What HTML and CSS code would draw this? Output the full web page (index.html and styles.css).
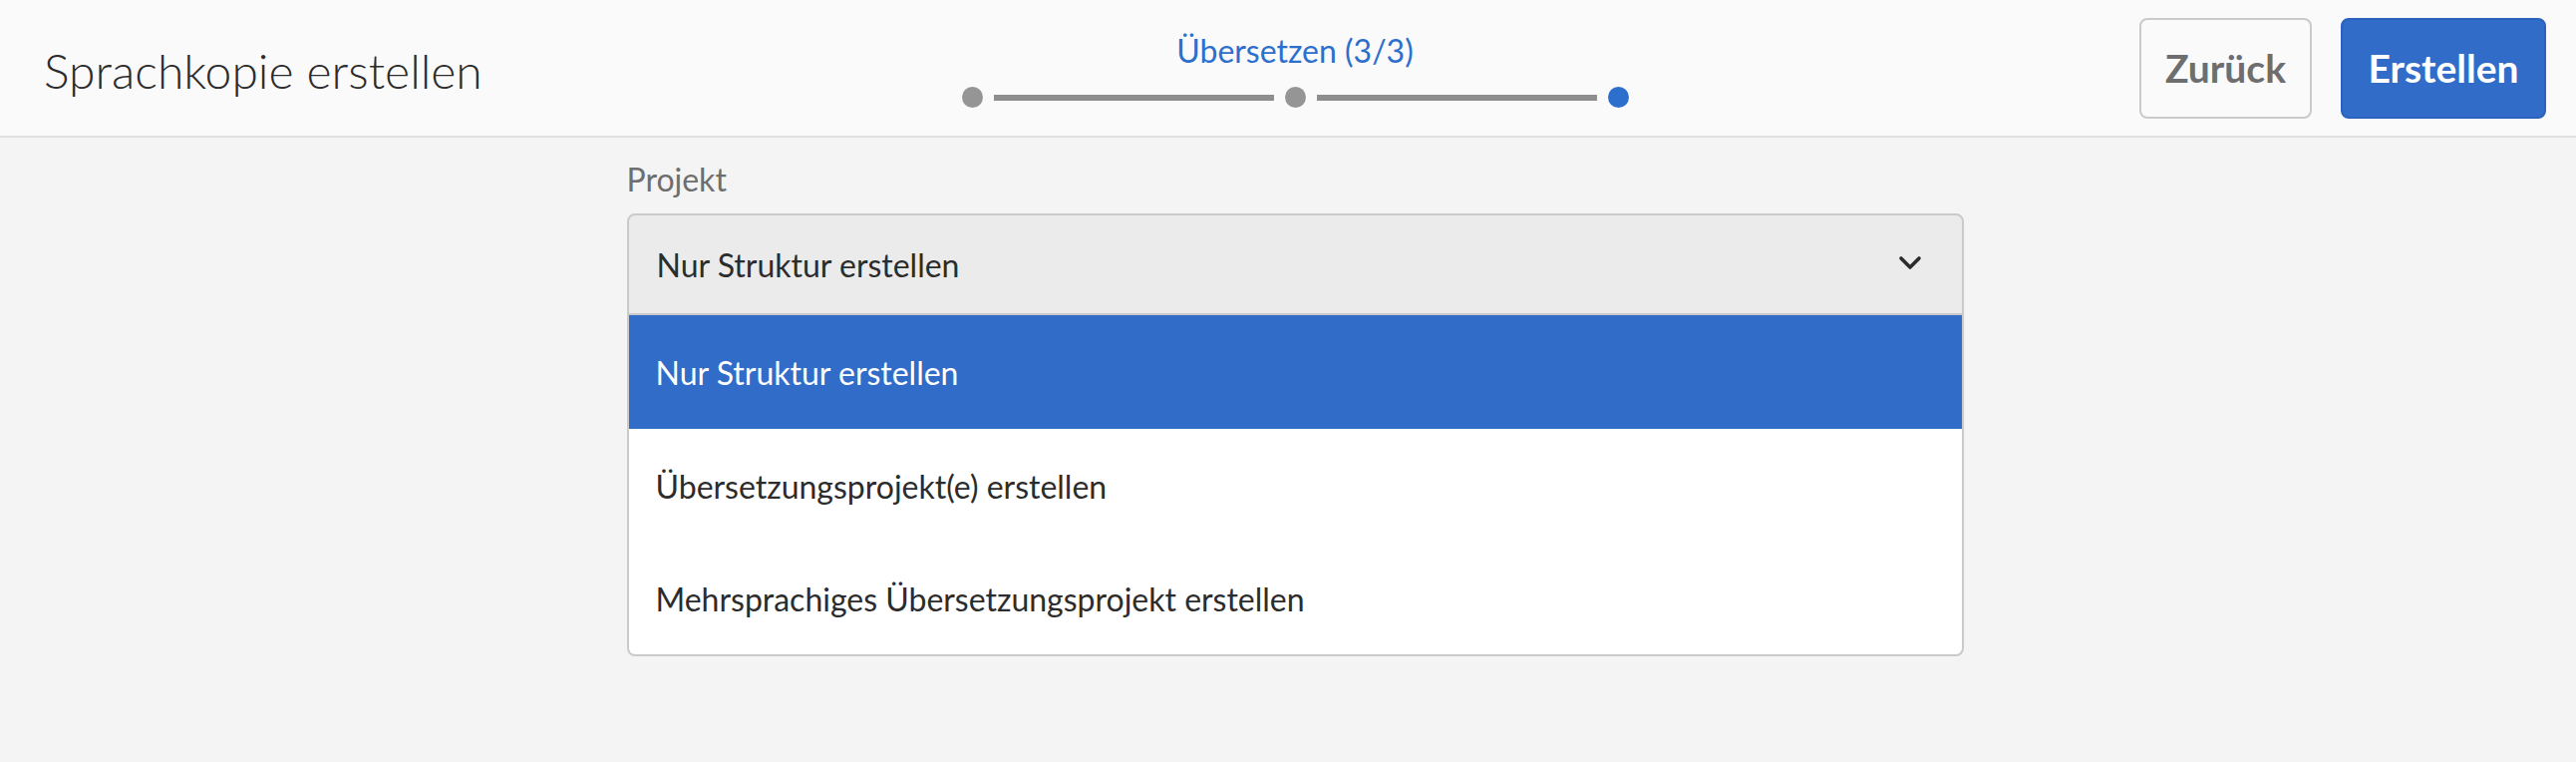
FILE: index.html
```html
<!DOCTYPE html>
<html lang="de">
<head>
<meta charset="utf-8">
<title>Sprachkopie erstellen</title>
<link rel="stylesheet" href="styles.css">
</head>
<body>
<header class="topbar">
  <h1 class="title">Sprachkopie erstellen</h1>
  <div class="stepper">
    <div class="step-label">Übersetzen (3/3)</div>
    <div class="track">
      <span class="dot"></span>
      <span class="line"></span>
      <span class="dot"></span>
      <span class="line"></span>
      <span class="dot active"></span>
    </div>
  </div>
  <div class="actions">
    <button class="btn btn-secondary">Zurück</button>
    <button class="btn btn-primary">Erstellen</button>
  </div>
</header>
<main class="content">
  <div class="form">
    <label class="field-label">Projekt</label>
    <div class="select">
      <div class="select-button">
        <span class="select-value">Nur Struktur erstellen</span>
        <svg class="chevron" width="24" height="16" viewBox="0 0 24 16"><path d="M3 3 L12 12 L21 3" fill="none" stroke="#2c2c2c" stroke-width="3.6" stroke-linecap="round" stroke-linejoin="round"/></svg>
      </div>
      <ul class="options">
        <li class="option selected">Nur Struktur erstellen</li>
        <li class="option">Übersetzungsprojekt(e) erstellen</li>
        <li class="option">Mehrsprachiges Übersetzungsprojekt erstellen</li>
      </ul>
    </div>
  </div>
</main>
</body>
</html>
```
FILE: styles.css
```css
* { box-sizing: border-box; }
html, body {
  margin: 0;
  padding: 0;
  background: #f4f4f4;
  font-family: Lato, "Liberation Sans", sans-serif;
  color: #2c2c2c;
}
.topbar {
  height: 138px;
  background: #fafafa;
  border-bottom: 2px solid #e1e1e1;
  display: grid;
  grid-template-columns: 1fr auto 1fr;
  align-items: center;
  padding: 0 30px 0 44px;
}
.title {
  margin: 0;
  font-weight: 300;
  font-size: 48px;
  color: #2c2c2c;
  padding-top: 4px;
}
.stepper {
  display: flex;
  flex-direction: column;
  align-items: center;
  padding-top: 9px;
  align-self: start;
}
.step-label {
  font-size: 32px;
  color: #2d6fcc;
  line-height: 40px;
  margin-top: 22px;
}
.track {
  display: flex;
  align-items: center;
  gap: 11px;
  margin-top: 16px;
}
.dot {
  width: 21px;
  height: 21px;
  border-radius: 50%;
  background: #959595;
}
.dot.active { background: #2d6fcc; }
.line {
  width: 281px;
  height: 6px;
  background: #8e8e8e;
}
.actions {
  display: flex;
  justify-content: flex-end;
  gap: 29px;
}
.btn {
  height: 101px;
  border-radius: 8px;
  font-family: Lato, "Liberation Sans", sans-serif;
  font-weight: 700;
  font-size: 39px;
  padding: 0;
  cursor: pointer;
}
.btn-secondary {
  width: 173px;
  background: #fafafa;
  border: 2px solid #cacaca;
  color: #6e6e6e;
}
.btn-primary {
  width: 206px;
  background: #306cc8;
  border: 2px solid #2a62bd;
  color: #ffffff;
}
.content {
  padding: 22px 0 0 14px;
  display: flex;
  justify-content: center;
}
.form {
  width: 1341px;
}
.field-label {
  display: block;
  font-size: 32px;
  color: #6e6e6e;
  line-height: 40px;
  height: 54px;
}
.select {
  width: 100%;
}
.select-button {
  height: 102px;
  background: #ebebeb;
  border: 2px solid #cacaca;
  border-radius: 8px 8px 0 0;
  display: flex;
  align-items: center;
  justify-content: space-between;
  padding: 0 40px 0 28px;
}
.select-value {
  font-size: 32px;
  color: #2c2c2c;
}
.chevron { display: block; margin-top: -2px; }
.options {
  list-style: none;
  margin: 0;
  padding: 0;
  background: #ffffff;
  border: 2px solid #cacaca;
  border-top: none;
  border-radius: 0 0 8px 8px;
  overflow: hidden;
}
.option {
  height: 114px;
  display: flex;
  align-items: center;
  padding-left: 27px;
  font-size: 32px;
  color: #2c2c2c;
}
.option:last-child { height: 112px; }
.option.selected {
  background: #306cc8;
  color: #ffffff;
}
```
